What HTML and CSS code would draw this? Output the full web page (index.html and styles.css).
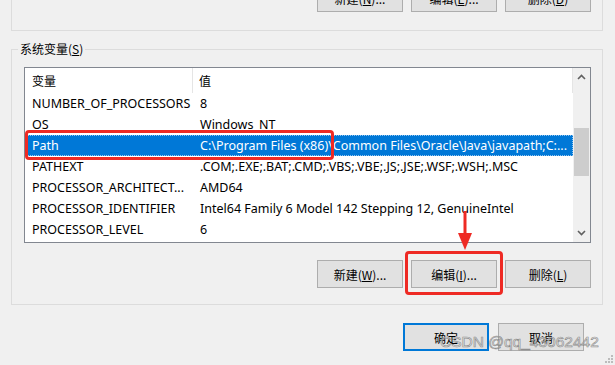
FILE: index.html
```html
<!DOCTYPE html>
<html lang="zh-CN">
<head>
    <meta charset="UTF-8">
    <title>环境变量</title>
    <link rel="stylesheet" href="styles.css">
</head>
<body>
    <div class="dialog">
        <div class="group user-group">
            <div class="btn-row top-row">
                <button class="btn">新建(<u>N</u>)...</button>
                <button class="btn">编辑(<u>E</u>)...</button>
                <button class="btn">删除(<u>D</u>)</button>
            </div>
        </div>

        <fieldset class="group sys-group">
            <legend>系统变量(<u>S</u>)</legend>
            <div class="list">
                <div class="table">
                    <div class="row head">
                        <div class="name">变量</div>
                        <div class="value">值</div>
                    </div>
                    <div class="row"><div class="name">NUMBER_OF_PROCESSORS</div><div class="value">8</div></div>
                    <div class="row"><div class="name">OS</div><div class="value">Windows_NT</div></div>
                    <div class="row selected">
                        <div class="name">Path</div>
                        <div class="value">C:\Program Files (x86)\Common Files\Oracle\Java\javapath;C:...</div>
                        <span class="mark mark-row"></span>
                    </div>
                    <div class="row"><div class="name">PATHEXT</div><div class="value">.COM;.EXE;.BAT;.CMD;.VBS;.VBE;.JS;.JSE;.WSF;.WSH;.MSC</div></div>
                    <div class="row"><div class="name">PROCESSOR_ARCHITECT...</div><div class="value">AMD64</div></div>
                    <div class="row"><div class="name">PROCESSOR_IDENTIFIER</div><div class="value">Intel64 Family 6 Model 142 Stepping 12, GenuineIntel</div></div>
                    <div class="row"><div class="name">PROCESSOR_LEVEL</div><div class="value">6</div></div>
                </div>
                <div class="scrollbar">
                    <div class="sb-btn">
                        <svg width="9" height="6" viewBox="0 0 9 6"><polyline points="1,5 4.5,1.5 8,5" fill="none" stroke="#606060" stroke-width="1.6"/></svg>
                    </div>
                    <div class="sb-track"><div class="sb-thumb"></div></div>
                    <div class="sb-btn">
                        <svg width="9" height="6" viewBox="0 0 9 6"><polyline points="1,1 4.5,4.5 8,1" fill="none" stroke="#606060" stroke-width="1.6"/></svg>
                    </div>
                </div>
            </div>
            <div class="btn-row">
                <button class="btn">新建(<u>W</u>)...</button>
                <button class="btn marked">编辑(<u>I</u>)...
                    <span class="mark mark-btn"></span>
                    <svg class="arrow" width="16" height="40" viewBox="0 0 16 40">
                        <line x1="8" y1="0" x2="8" y2="26" stroke="#ee2a24" stroke-width="3"/>
                        <polygon points="1,22 15,22 8,39" fill="#ee2a24"/>
                    </svg>
                </button>
                <button class="btn">删除(<u>L</u>)</button>
            </div>
        </fieldset>

        <div class="btn-row dialog-row">
            <button class="btn default">确定</button>
            <button class="btn">取消</button>
        </div>

        <div class="watermark">CSDN @qq_43062442</div>
        <svg class="grip" width="10" height="10" viewBox="0 0 10 10">
            <rect x="7" y="1" width="2" height="2" fill="#bcbcbc"/>
            <rect x="4" y="4" width="2" height="2" fill="#bcbcbc"/>
            <rect x="7" y="4" width="2" height="2" fill="#bcbcbc"/>
            <rect x="1" y="7" width="2" height="2" fill="#bcbcbc"/>
            <rect x="4" y="7" width="2" height="2" fill="#bcbcbc"/>
            <rect x="7" y="7" width="2" height="2" fill="#bcbcbc"/>
        </svg>
    </div>
</body>
</html>
```

FILE: styles.css
```css
body {
    margin: 0;
    width: 615px;
    height: 365px;
    overflow: hidden;
    background: #f0f0f0;
    font-family: "Noto Sans", "Noto Sans CJK SC", sans-serif;
    font-size: 12.5px;
    color: #000;
}
.dialog {
    position: relative;
    height: 365px;
    padding: 0 12px 0 11px;
    box-sizing: border-box;
}
.group {
    border: 1px solid #dcdcdc;
}
.user-group {
    display: flow-root;
    height: 30px;
    border-top: none;
}
.btn-row {
    display: flex;
    justify-content: flex-end;
}
.top-row {
    margin-top: -16px;
    padding-right: 11px;
}
.btn {
    position: relative;
    width: 86px;
    height: 28px;
    padding: 0;
    background: #e1e1e1;
    border: 1px solid #adadad;
    font-family: "Noto Sans CJK SC", "Noto Sans", sans-serif;
    font-size: 12px;
    color: #000;
}
.btn + .btn {
    margin-left: 8px;
}
.btn u {
    text-decoration-thickness: 1px;
    text-underline-offset: 1px;
}
.sys-group {
    margin: 11px 0 0;
    padding: 11px 11px 16px 12px;
    min-width: 0;
}
.sys-group legend {
    margin-left: -6px;
    padding: 0 2px;
    line-height: 14px;
    font-family: "Noto Sans CJK SC", "Noto Sans", sans-serif;
    font-size: 12px;
}
.list {
    display: flex;
    height: 176px;
    box-sizing: border-box;
    border: 1px solid #828790;
    background: #fff;
    overflow: hidden;
}
.table {
    flex: 1;
}
.row {
    position: relative;
    display: grid;
    grid-template-columns: 168px 1fr;
    height: 21px;
    align-items: center;
    white-space: nowrap;
}
.row .name,
.row .value {
    padding-left: 7px;
    overflow: hidden;
}
.row.head {
    height: 25px;
    align-items: stretch;
    font-family: "Noto Sans CJK SC", "Noto Sans", sans-serif;
    font-size: 12px;
}
.row.head .name,
.row.head .value {
    display: flex;
    align-items: center;
    border-right: 1px solid #e5e5e5;
}
.row.head .value {
    padding-left: 6px;
}
.row.selected {
    background: #0078d7;
    color: #fff;
    outline: 1px dotted #8fc4f0;
    outline-offset: -1px;
}
.scrollbar {
    display: flex;
    flex-direction: column;
    width: 17px;
    background: #f0f0f0;
}
.sb-btn {
    height: 18px;
    display: flex;
    align-items: center;
    justify-content: center;
}
.sb-track {
    flex: 1;
    padding: 42px 1px 0;
}
.sb-thumb {
    height: 48px;
    background: #cdcdcd;
}
.sys-group .btn-row {
    margin-top: 17px;
}
.dialog-row {
    margin-top: 18px;
    padding-right: 19px;
}
.dialog-row .btn + .btn {
    margin-left: 9px;
}
.btn.default {
    border: 2px solid #0078d7;
}
.mark {
    position: absolute;
    border: 3px solid #ee2a24;
    border-radius: 4px;
    pointer-events: none;
}
.mark-row {
    left: 0;
    top: -5px;
    width: 303px;
    height: 24px;
}
.mark-btn {
    left: -7px;
    top: -10px;
    width: 92px;
    height: 38px;
}
.arrow {
    position: absolute;
    left: 45px;
    top: -50px;
}
.watermark {
    position: absolute;
    left: 440px;
    top: 333px;
    font-family: "Liberation Sans", sans-serif;
    font-size: 15.5px;
    color: rgba(255, 255, 255, 0.6);
    -webkit-text-stroke: 0.7px rgba(110, 110, 110, 0.75);
    white-space: nowrap;
}
.grip {
    position: absolute;
    right: 1px;
    bottom: 1px;
}
```
